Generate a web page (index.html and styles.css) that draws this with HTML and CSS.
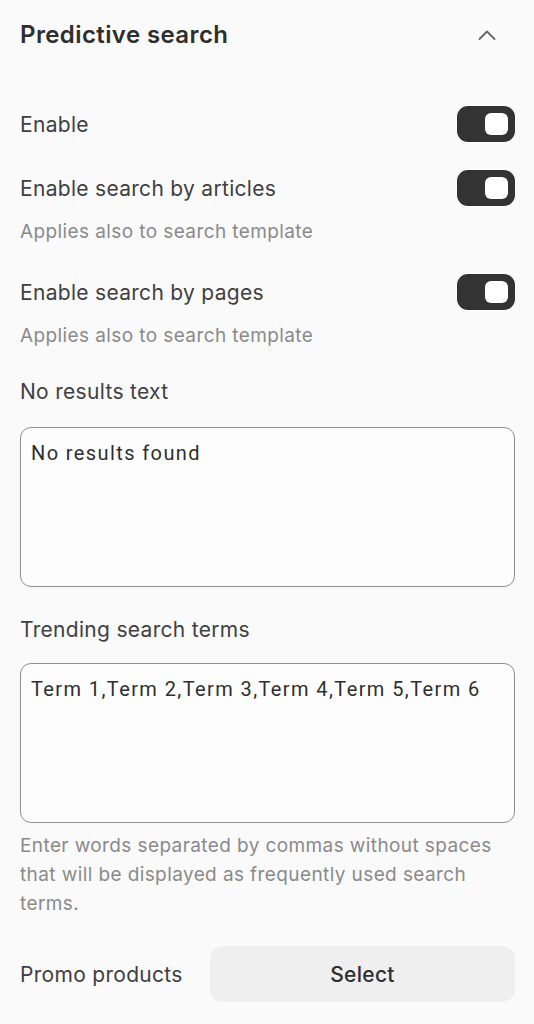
FILE: index.html
```html
<!DOCTYPE html>
<html>
<head>
<meta charset="utf-8">
<link rel="stylesheet" href="styles.css">
</head>
<body>
<div class="panel">
  <div class="header">
    <h2 class="title">Predictive search</h2>
    <svg class="chevron" width="18" height="12" viewBox="0 0 18 12"><path d="M1.5 10 L9 2.5 L16.5 10" fill="none" stroke="#666" stroke-width="1.8" stroke-linecap="round" stroke-linejoin="round"/></svg>
  </div>
  <div class="row row-first">
    <span class="label">Enable</span>
    <span class="toggle"><span class="knob"></span></span>
  </div>
  <div class="row row-next">
    <span class="label">Enable search by articles</span>
    <span class="toggle"><span class="knob"></span></span>
  </div>
  <p class="hint">Applies also to search template</p>
  <div class="row row-after-hint">
    <span class="label">Enable search by pages</span>
    <span class="toggle"><span class="knob"></span></span>
  </div>
  <p class="hint">Applies also to search template</p>
  <p class="field-label fl-first">No results text</p>
  <div class="textarea ta-first">No results found</div>
  <p class="field-label fl-second">Trending search terms</p>
  <div class="textarea ta-second">Term 1,Term 2,Term 3,Term 4,Term 5,Term 6</div>
  <p class="help">Enter words separated by commas without spaces that will be displayed as frequently used search terms.</p>
  <div class="promo">
    <span class="label">Promo products</span>
    <button class="select-btn">Select</button>
  </div>
</div>
</body>
</html>
```
FILE: styles.css
```css
* { box-sizing: border-box; }
html, body { margin: 0; padding: 0; background: #fafafa; }
body { font-family: Inter, "Noto Sans", sans-serif; color: #333; }
.panel { padding: 0 19px 0 20px; width: 534px; }
.header { height: 68px; display: flex; align-items: center; justify-content: space-between; }
.title { margin: 0; font-size: 24px; font-weight: 600; color: #2e2e2e; letter-spacing: 0.4px; }
.chevron { margin-right: 19px; margin-top: 2px; }
.row { display: flex; align-items: center; justify-content: space-between; height: 36px; }
.row-first { margin-top: 38px; }
.row-next { margin-top: 28px; }
.row-after-hint { margin-top: 30px; }
.label { font-size: 21px; letter-spacing: 0.3px; color: #404040; }
.toggle { width: 58px; height: 36px; border-radius: 11px; background: #333; display: flex; align-items: center; justify-content: flex-end; padding-right: 7px; }
.knob { width: 23px; height: 22px; border-radius: 6px; background: #fff; }
.hint { margin: 14px 0 0; font-size: 19px; letter-spacing: 0.4px; line-height: 24px; color: #8a8a8a; }
.field-label { margin: 0; font-size: 21px; letter-spacing: 0.3px; line-height: 24px; color: #404040; }
.fl-first { margin-top: 32px; }
.fl-second { margin-top: 31px; }
.textarea { height: 160px; border: 1.5px solid #8f8f8f; border-radius: 11px; background: #fdfdfd; padding: 13px 10px; font-family: Roboto, "Liberation Sans", sans-serif; font-size: 20px; letter-spacing: 1.4px; line-height: 24px; color: #2f2f2f; }
.ta-first { margin-top: 23px; }
.ta-second { margin-top: 21px; }
.help { margin: 8px 0 0; font-size: 19px; letter-spacing: 0.4px; line-height: 29px; color: #8a8a8a; }
.promo { margin-top: 28px; display: flex; align-items: center; justify-content: space-between; }
.select-btn { width: 305px; height: 56px; border: none; border-radius: 13px; background: #efefef; font-family: Inter, "Noto Sans", sans-serif; font-size: 21px; letter-spacing: 0.3px; font-weight: 500; color: #2e2e2e; }
```
